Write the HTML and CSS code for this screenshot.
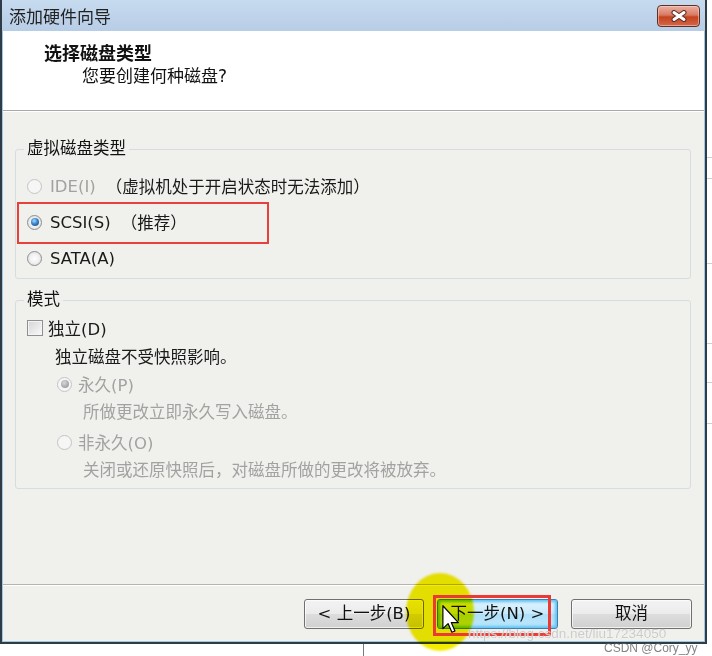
FILE: index.html
```
<!DOCTYPE html>
<html lang="zh-CN">
<head>
    <meta charset="UTF-8">
    <meta name="viewport" content="width=device-width, initial-scale=1.0">
    <title>添加硬件向导</title>
    <link rel="stylesheet" href="styles.css">
</head>
<body>
    <div class="screen">
        <div class="window">
            <!-- Barra de título -->
            <div class="titlebar">
                <span class="title">添加硬件向导</span>
                <div class="close">
                    <svg width="18" height="12" viewBox="0 0 18 12">
                        <path d="M4 2.5 L14 9.5 M14 2.5 L4 9.5" stroke="#5a2e24" stroke-width="5" stroke-linecap="round"/>
                        <path d="M4 2.5 L14 9.5 M14 2.5 L4 9.5" stroke="#fff" stroke-width="3" stroke-linecap="round"/>
                    </svg>
                </div>
            </div>

            <div class="frame">
                <div class="header">
                    <div class="header-title">选择磁盘类型</div>
                    <div class="header-sub">您要创建何种磁盘?</div>
                </div>

                <div class="content">
                    <fieldset class="group group-type">
                        <legend>虚拟磁盘类型</legend>
                        <div class="row">
                            <span class="radio off"></span>
                            <span class="label disabled">IDE(I)</span>
                            <span class="note">（虚拟机处于开启状态时无法添加）</span>
                        </div>
                        <div class="row marked">
                            <span class="radio checked"></span>
                            <span class="label">SCSI(S)</span>
                            <span class="note">（推荐）</span>
                        </div>
                        <div class="row">
                            <span class="radio"></span>
                            <span class="label">SATA(A)</span>
                        </div>
                    </fieldset>

                    <fieldset class="group group-mode">
                        <legend>模式</legend>
                        <div class="line">
                            <span class="checkbox"></span>
                            <span class="check-label">独立(D)</span>
                        </div>
                        <div class="line hint">独立磁盘不受快照影响。</div>
                        <div class="line option disabled">
                            <span class="radio off checked"></span>
                            <span class="option-label">永久(P)</span>
                        </div>
                        <div class="line desc desc-first disabled">所做更改立即永久写入磁盘。</div>
                        <div class="line option option-second disabled">
                            <span class="radio off"></span>
                            <span class="option-label">非永久(O)</span>
                        </div>
                        <div class="line desc desc-last disabled">关闭或还原快照后，对磁盘所做的更改将被放弃。</div>
                    </fieldset>
                </div>

                <div class="footer">
                    <button class="btn btn-back">&lt; 上一步(B)</button>
                    <button class="btn btn-default">下一步(N) &gt;</button>
                    <button class="btn">取消</button>
                </div>
            </div>
        </div>
        <div class="side"></div>
    </div>
    <div class="below"><span class="below-line"></span></div>

    <!-- Marcações da gravação -->
    <div class="spot"></div>
    <div class="mark-next"></div>
    <svg class="cursor" width="18" height="28" viewBox="0 0 12 19">
        <path d="M0.5 0.5 V16 L4 12.6 L6.6 18.5 L8.7 17.6 L6.2 11.9 H11 Z" fill="#fff" stroke="#000" stroke-width="0.8" stroke-linejoin="round"/>
    </svg>
    <div class="watermark">https://blog.csdn.net/liu17234050</div>
    <div class="credit">CSDN @Cory_yy</div>
</body>
</html>
```

FILE: styles.css
```
* {
    box-sizing: border-box;
}
html, body {
    margin: 0;
    padding: 0;
}
body {
    position: relative;
    width: 712px;
    height: 656px;
    overflow: hidden;
    background: #fff;
    font-family: "DejaVu Sans", "Noto Sans CJK SC", sans-serif;
    font-size: 16.5px;
    color: #1a1a1a;
}
.screen {
    display: flex;
    height: 644px;
}
.window {
    width: 707px;
    height: 644px;
    flex: none;
    display: flex;
    flex-direction: column;
    border: 2px solid #2f3b45;
    border-top: none;
    background: #bcd2ea;
}
.titlebar {
    height: 31px;
    flex: none;
    display: flex;
    align-items: center;
    justify-content: space-between;
    padding: 0 5px 0 7px;
    background: linear-gradient(#c7dbef, #b7cde6);
}
.title {
    font-family: "Noto Sans CJK SC", sans-serif;
    font-size: 17px;
    color: #222;
}
.close {
    width: 43px;
    height: 22px;
    display: flex;
    align-items: center;
    justify-content: center;
    border: 1px solid #5b3128;
    border-radius: 4px;
    background: linear-gradient(#eab1a3 0%, #d97a63 45%, #c4431f 55%, #d4674a 100%);
    box-shadow: inset 0 0 0 1px rgba(255, 220, 210, 0.5);
}
.frame {
    flex: 1;
    display: flex;
    flex-direction: column;
    border: 1px solid #9fc6e2;
    border-top: none;
    background: #f0f0ed;
}
.header {
    height: 80px;
    flex: none;
    padding: 10px 0 0 41px;
    background: #fff;
    border-bottom: 1px solid #a8a8a8;
}
.header-title {
    font-family: "Noto Sans CJK SC", sans-serif;
    font-size: 18px;
    font-weight: bold;
    line-height: 22px;
    color: #111;
}
.header-sub {
    margin: 2px 0 0 38px;
    font-size: 17px;
    line-height: 22px;
    color: #111;
}
.content {
    flex: 1;
    border-top: 1px solid #fff;
    padding-top: 28px;
}
.group {
    min-width: 0;
    margin: 0 13px 0 12px;
    padding: 0 0 2px 11px;
    border: 1px solid #d5dde3;
    border-radius: 3px;
}
.group legend {
    margin-left: -3px;
    padding: 0 3px;
    line-height: 18px;
    color: #111;
}
.group-type {
    padding-top: 10px;
}
.group-mode {
    margin-top: 12px;
    padding-top: 5px;
    padding-bottom: 5px;
}
.row {
    position: relative;
    height: 36px;
    display: flex;
    align-items: center;
}
.label {
    margin-left: 8px;
}
.note {
    margin-left: 10px;
    font-family: "Noto Sans CJK SC", sans-serif;
}
.disabled {
    color: #a2a2a2;
}
.marked::after {
    content: "";
    position: absolute;
    left: -10px;
    top: -2px;
    width: 248px;
    height: 38px;
    border: 2px solid #e8403b;
}
.radio {
    width: 15px;
    height: 15px;
    flex: none;
    border-radius: 50%;
    border: 1px solid #8d8f90;
    background: radial-gradient(circle at 50% 50%, #fdfdfd 0, #f2f2f2 45%, #d6d6d6 100%);
    display: flex;
    align-items: center;
    justify-content: center;
}
.radio.checked::before {
    content: "";
    width: 8px;
    height: 8px;
    border-radius: 50%;
    background: radial-gradient(circle at 40% 35%, #a9dcfb 0, #3a86cc 45%, #12406f 100%);
}
.radio.off {
    border-color: #c4c4c4;
    background: #f6f6f6;
}
.radio.off.checked::before {
    background: radial-gradient(circle at 40% 35%, #d8d8d8 0, #a9a9a9 60%, #8f8f8f 100%);
}
.line {
    height: 28px;
    display: flex;
    align-items: center;
}
.checkbox {
    width: 16px;
    height: 16px;
    flex: none;
    border: 1px solid #8d8f90;
    background: linear-gradient(135deg, #d4d4d4, #fafafa);
    box-shadow: inset 0 0 0 1px #f4f4f4;
}
.check-label {
    margin-left: 5px;
}
.hint {
    padding-left: 28px;
}
.option {
    padding-left: 30px;
}
.option-label {
    margin-left: 6px;
}
.desc {
    padding-left: 56px;
}
.desc-first {
    margin-top: -1px;
}
.option-second {
    margin-top: 3px;
}
.desc-last {
    margin-top: -1px;
}
.footer {
    height: 57px;
    flex: none;
    display: flex;
    justify-content: flex-end;
    align-items: flex-start;
    gap: 13px;
    padding: 14px 12px 0 0;
    border-top: 1px solid #b4b4b1;
    box-shadow: inset 0 1px 0 #fff;
}
.btn {
    width: 121px;
    height: 30px;
    padding: 0;
    border: 1px solid #707070;
    border-radius: 3px;
    background: linear-gradient(#f3f3f3 0%, #ebebeb 50%, #dddddd 51%, #d0d0d0 100%);
    box-shadow: inset 0 0 0 1px rgba(255, 255, 255, 0.7);
    font: inherit;
    color: #111;
    line-height: 28px;
}
.btn-back {
    width: 120px;
}
.btn-default {
    border-color: #3c7fb1;
    background: linear-gradient(#e2f4fd 0%, #c6e9fb 50%, #ade0f9 51%, #bfe7fb 100%);
    box-shadow: inset 0 0 3px 2px #5ec2f3;
}
.side {
    flex: 1;
    background:
        linear-gradient(#cfcfcf, #cfcfcf) 0 157px / 100% 1px no-repeat,
        linear-gradient(#cfcfcf, #cfcfcf) 0 178px / 100% 1px no-repeat,
        linear-gradient(#cfcfcf, #cfcfcf) 0 263px / 100% 1px no-repeat,
        linear-gradient(#cfcfcf, #cfcfcf) 0 343px / 100% 1px no-repeat,
        linear-gradient(#cfcfcf, #cfcfcf) 0 382px / 100% 1px no-repeat,
        linear-gradient(#cfcfcf, #cfcfcf) 0 423px / 100% 1px no-repeat,
        #fff;
}
.below {
    height: 12px;
    padding-left: 363px;
    display: flex;
}
.below-line {
    width: 1px;
    height: 12px;
    background: #7a7a7a;
}
.spot {
    position: absolute;
    left: 406px;
    top: 573px;
    width: 68px;
    height: 78px;
    border-radius: 50%;
    background: #f3eb00;
    mix-blend-mode: multiply;
    filter: blur(1px);
}
.mark-next {
    position: absolute;
    left: 433px;
    top: 595px;
    width: 118px;
    height: 41px;
    border: 3px solid #ea3a33;
}
.cursor {
    position: absolute;
    left: 442px;
    top: 605px;
}
.watermark {
    position: absolute;
    left: 468px;
    top: 627px;
    font-family: "Liberation Sans", sans-serif;
    font-size: 13.5px;
    line-height: 14px;
    color: rgba(190, 190, 190, 0.8);
    text-shadow: 0 0 1px #fff;
}
.credit {
    position: absolute;
    left: 604px;
    top: 642px;
    font-family: "Liberation Sans", sans-serif;
    font-size: 12px;
    line-height: 13px;
    color: rgba(90, 90, 90, 0.75);
}
```
